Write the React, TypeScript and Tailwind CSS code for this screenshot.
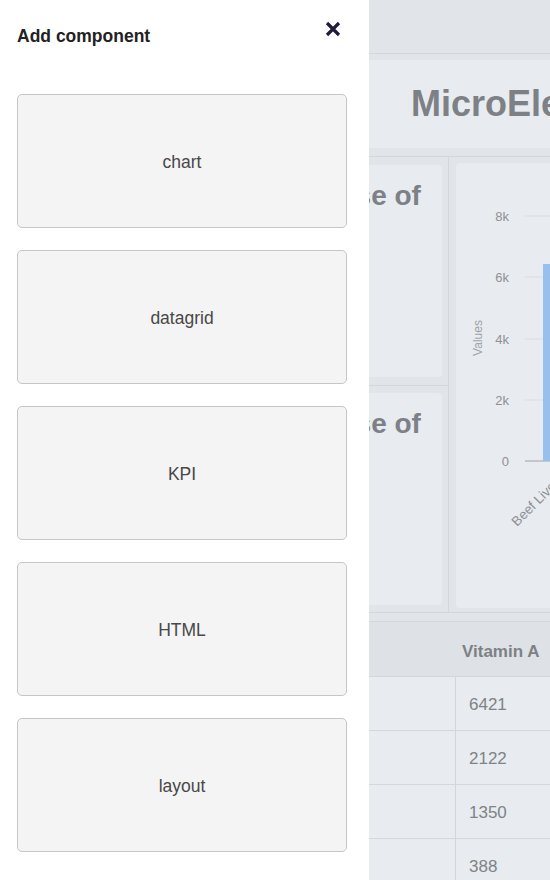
import React from "react";

const items = ["chart", "datagrid", "KPI", "HTML", "layout"];

function Chart() {
  const ticks = [
    { y: 53, l: "8k" },
    { y: 114, l: "6k" },
    { y: 176, l: "4k" },
    { y: 237, l: "2k" },
    { y: 298, l: "0" },
  ];
  return (
    <svg width="200" height="444" className="block">
      {ticks.map((t) => (
        <g key={t.l}>
          <line x1="69" x2="200" y1={t.y} y2={t.y} stroke={t.l === "0" ? "#9ea2a6" : "#d9dce0"} strokeWidth="1" />
          <text x="53" y={t.y + 5} textAnchor="end" fontSize="13" fill="#8d9195" fontFamily="Liberation Sans, Arial, sans-serif">
            {t.l}
          </text>
        </g>
      ))}
      <rect x="87" y="101" width="80" height="197" fill="#99c0ec" />
      <text
        transform="translate(26,175) rotate(-90)"
        textAnchor="middle"
        fontSize="12"
        fill="#a0a4a8"
        fontFamily="Liberation Sans, Arial, sans-serif"
      >
        Values
      </text>
      <text
        transform="translate(104,321) rotate(-45)"
        textAnchor="end"
        fontSize="13.5"
        fill="#8d9195"
        fontFamily="Liberation Sans, Arial, sans-serif"
      >
        Beef Liver
      </text>
    </svg>
  );
}

export default function App() {
  return (
    <div
      className="relative w-[550px] h-[880px] overflow-hidden bg-white"
      style={{ fontFamily: "'Liberation Sans', Arial, Helvetica, sans-serif" }}
    >
      {/* Background dashboard (dimmed) */}
      <div className="flex flex-col w-[550px] h-[880px] bg-[#e1e4e8]">
        <div className="h-[54px] shrink-0 border-b border-[#d3d6da] bg-[#e1e4e8]" />
        <div className="mt-[6px] h-[88px] shrink-0 bg-[#e8ebef] flex items-center pl-[411px] whitespace-nowrap overflow-hidden">
          <span className="text-[36px] font-bold text-[#7d8185] leading-none">MicroElements Dashboard</span>
        </div>
        <div className="h-[8px] shrink-0" />
        <div className="h-[457px] shrink-0 flex border-t border-b border-[#d3d6da]">
          <div className="w-[449px] shrink-0 flex flex-col border-r border-[#d3d6da]">
            <div className="h-[229px] border-b border-[#d3d6da] pt-[8px] pb-[8px] pr-[6px] pl-[8px]">
              <div className="h-full rounded bg-[#e8ebef] pt-[10px] pl-[193px] whitespace-nowrap overflow-hidden">
                <span className="text-[28px] font-bold text-[#7d8185]">Average Dose of</span>
              </div>
            </div>
            <div className="flex-1 pt-[7px] pb-[7px] pr-[6px] pl-[8px]">
              <div className="h-full rounded bg-[#e8ebef] pt-[10px] pl-[193px] whitespace-nowrap overflow-hidden">
                <span className="text-[28px] font-bold text-[#7d8185]">Average Dose of</span>
              </div>
            </div>
          </div>
          <div className="flex-1 pt-[6px] pb-[4px] pl-[7px]">
            <div className="h-full rounded-l bg-[#e8ebef] overflow-hidden">
              <Chart />
            </div>
          </div>
        </div>
        <div className="h-[9px] shrink-0 border-b border-[#d3d6da]" />
        <div className="h-[55px] shrink-0 flex bg-[#dee1e5] border-b border-[#d3d6da]">
          <div className="w-[456px] shrink-0" />
          <div className="flex-1 flex items-center pl-[6px] pt-[6px] text-[17px] font-bold text-[#7d8185] whitespace-nowrap">Vitamin A</div>
        </div>
        {["6421", "2122", "1350", "388"].map((v) => (
          <div key={v} className="h-[54px] shrink-0 flex bg-[#e8ebef] border-b border-[#d3d6da]">
            <div className="w-[456px] shrink-0 border-r border-[#d3d6da]" />
            <div className="flex-1 flex items-center pl-[13px] pt-[2px] text-[17px] text-[#7f8387]">{v}</div>
          </div>
        ))}
      </div>

      {/* Drawer overlay */}
      <div className="absolute left-0 top-0 h-[880px] w-[369px] bg-white flex flex-col">
        <div className="flex items-start justify-between pl-[17px] pr-[28px] pt-[26px] h-[94px]">
          <h2 className="text-[17.5px] font-bold text-[#222] leading-5">Add component</h2>
          <button className="mt-[-5px] w-[16px] h-[16px] flex items-center justify-center">
            <svg width="16" height="16" viewBox="0 0 16 16">
              <path d="M2 2 L14 14 M14 2 L2 14" stroke="#1f1d3a" strokeWidth="3.2" strokeLinecap="butt" />
            </svg>
          </button>
        </div>
        <div className="flex flex-col gap-[22px] pl-[17px] pr-[22px]">
          {items.map((it) => (
            <div
              key={it}
              className="h-[134px] rounded-[5px] border border-[#c6c6c6] bg-[#f4f4f4] flex items-center justify-center pt-[3px] text-[17.5px] text-[#484848]"
            >
              {it}
            </div>
          ))}
        </div>
      </div>
    </div>
  );
}
